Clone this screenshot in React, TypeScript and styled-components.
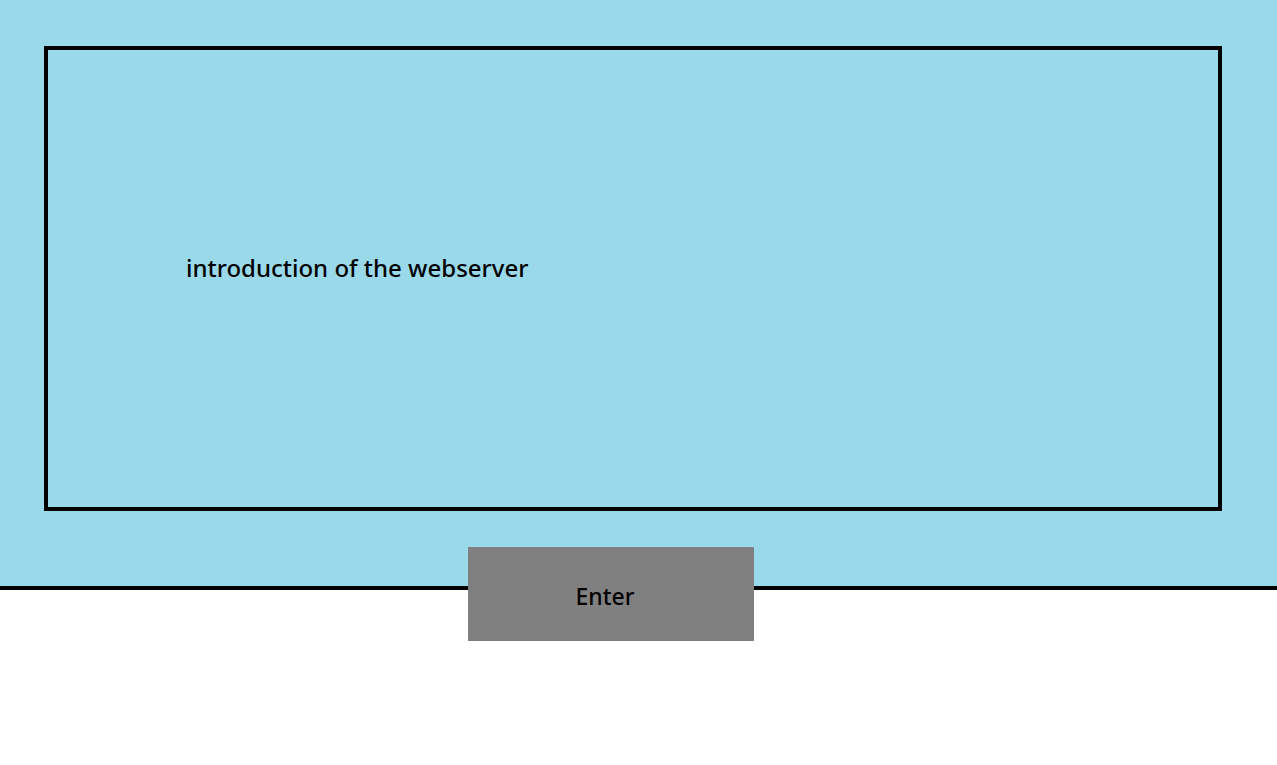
import React from 'react';
import styled, {createGlobalStyle} from 'styled-components';

const Global = createGlobalStyle`
  html, body {
    margin: 0;
    padding: 0;
    background: white;
  }
  body {
    font-family: 'Noto Sans', 'Open Sans', sans-serif;
  }
`;

const App: React.FC = () => {
  return (
    <>
      <Global />
      <Hero>
        <IntroBox>
          <IntroText>introduction of the webserver</IntroText>
        </IntroBox>
      </Hero>
      <ButtonRow>
        <EnterButton>Enter</EnterButton>
      </ButtonRow>
    </>
  );
};

export default App;

const Hero = styled.div`
  background: #99d9ea;
  padding: 46px 55px 36px 44px;
`;

const IntroBox = styled.div`
  box-sizing: border-box;
  width: 1178px;
  height: 465px;
  border: 4px solid black;
  display: flex;
  align-items: center;
  padding: 0 0 22px 138px;
`;

const IntroText = styled.p`
  margin: 0;
  font-size: 24px;
  font-weight: 500;
  color: black;
`;

// blue strip + black rule behind the button
const ButtonRow = styled.div`
  display: flex;
  height: 94px;
  padding-left: 468px;
  background: linear-gradient(
    to bottom,
    #99d9ea 0,
    #99d9ea 39px,
    black 39px,
    black 43px,
    white 43px
  );
`;

const EnterButton = styled.div`
  width: 286px;
  height: 94px;
  box-sizing: border-box;
  background: #808080;
  display: flex;
  align-items: center;
  justify-content: center;
  padding: 4px 12px 0 0;
  font-size: 23px;
  font-weight: 500;
  color: black;
`;
